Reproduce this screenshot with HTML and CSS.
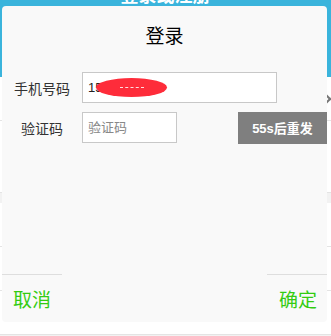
FILE: index.html
```html
<!DOCTYPE html>
<html>
<head>
  <meta charset="utf-8">
  <title>登录</title>
  <link rel="stylesheet" href="styles.css">
</head>
<body>
  <header class="top-bar">
    <h1 class="top-title">登录或注册</h1>
  </header>
  <ul class="page-list">
    <li class="page-row"><span class="chevron"></span></li>
    <li class="page-row page-row-tall"></li>
    <li class="page-gap"></li>
    <li class="page-row"></li>
    <li class="page-row"></li>
    <li class="page-row"></li>
  </ul>

  <div class="dialog">
    <h2 class="dialog-title">登录</h2>

    <div class="form-row">
      <label class="form-label">手机号码</label>
      <div class="phone-box">
        <input class="form-input phone-input" type="text" value="15">
        <span class="phone-mask"><span class="mask-dash"></span></span>
      </div>
    </div>

    <div class="form-row">
      <label class="form-label">验证码</label>
      <input class="form-input code-input" type="text" placeholder="验证码">
      <button class="resend-btn">55s后重发</button>
    </div>

    <div class="dialog-footer">
      <button class="footer-btn cancel-btn">取消</button>
      <button class="footer-btn ok-btn">确定</button>
    </div>
  </div>
</body>
</html>
```

FILE: styles.css
```css
body {
  margin: 0;
  padding: 0;
  background-color: #f2f2f2;
  font-family: "Noto Sans CJK SC", "Liberation Sans", sans-serif;
  height: 336px;
  overflow: hidden;
}

.top-bar {
  height: 77px;
  background-color: #3ab4dc;
  overflow: hidden;
}

.top-title {
  margin: -16px 0 0 0;
  color: #ffffff;
  font-size: 18px;
  line-height: 20px;
  text-align: center;
  font-weight: bold;
}

.page-list {
  list-style: none;
  margin: 0;
  padding: 0;
}

.page-row {
  height: 43px;
  background-color: #ffffff;
  border-bottom: 1px solid #e4e4e4;
  display: flex;
  align-items: center;
  justify-content: flex-end;
}

.page-row-tall {
  height: 71px;
}

.page-gap {
  height: 10px;
}

.chevron {
  width: 10px;
  height: 10px;
  border-top: 2px solid #777;
  border-right: 2px solid #777;
  transform: rotate(45deg);
  margin-right: 2px;
}

/* ventana de login */
.dialog {
  position: absolute;
  left: 2px;
  top: 6px;
  width: 325px;
  height: 316px;
  background-color: #f9f9f9;
  border-radius: 4px;
  display: flex;
  flex-direction: column;
}

.dialog-title {
  margin: 0;
  height: 58px;
  line-height: 58px;
  font-size: 19px;
  font-weight: normal;
  text-align: center;
  color: #000;
}

.form-row {
  display: flex;
  align-items: center;
  height: 31px;
  margin-top: 8px;
}

.form-row + .form-row {
  margin-top: 9px;
}

.form-label {
  width: 80px;
  text-align: center;
  font-size: 14px;
  color: #333;
}

.form-input {
  box-sizing: border-box;
  height: 31px;
  border: 1px solid #c8c8c8;
  background-color: #ffffff;
  padding: 0 5px;
  font-family: "Liberation Sans", "Noto Sans CJK SC", sans-serif;
  font-size: 13px;
  color: #222;
  outline: none;
}

.form-input::placeholder {
  color: #888;
}

.phone-box {
  position: relative;
}

.phone-input {
  width: 195px;
}

.phone-mask {
  position: absolute;
  left: 14px;
  top: 6px;
  width: 71px;
  height: 19px;
  border-radius: 50%;
  background-color: #fe2c3a;
  display: flex;
  align-items: center;
  justify-content: center;
}

.mask-dash {
  width: 24px;
  border-top: 1px dashed #ffdede;
}

.code-input {
  width: 95px;
}

.resend-btn {
  margin-left: auto;
  width: 89px;
  height: 32px;
  border: none;
  background-color: #7f7f7f;
  color: #ffffff;
  font-family: "Liberation Sans", "Noto Sans CJK SC", sans-serif;
  font-size: 13px;
  font-weight: bold;
  padding: 0;
}

.dialog-footer {
  margin-top: auto;
  display: flex;
  justify-content: space-between;
}

.footer-btn {
  width: 60px;
  height: 48px;
  border: none;
  border-top: 1px solid #dedede;
  background: none;
  color: #33cc11;
  font-family: "Noto Sans CJK SC", "Liberation Sans", sans-serif;
  font-size: 19px;
  padding: 0;
}

.cancel-btn {
  text-align: left;
  padding-left: 11px;
}

.ok-btn {
  text-align: right;
  padding-right: 10px;
}
```
